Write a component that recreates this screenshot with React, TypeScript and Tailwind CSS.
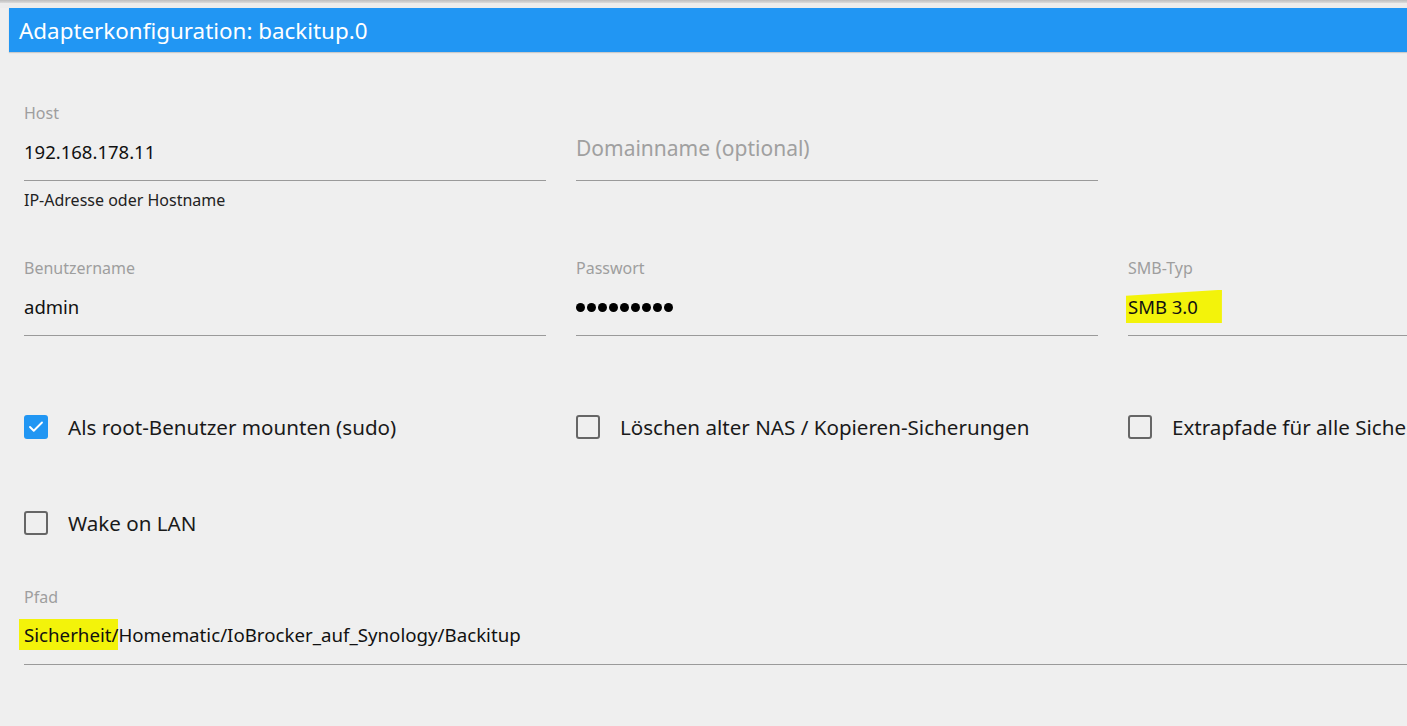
import { Check } from 'lucide-react';
import type { ReactNode } from 'react';

const font = { fontFamily: '"Noto Sans", "Open Sans", sans-serif' };

function Field({ label, children, helper, muted }: { label: string; children: ReactNode; helper?: string; muted?: boolean }) {
  return (
    <div className="flex flex-col">
      <div className="text-[16px] leading-[20px] h-[20px] text-[#9e9e9e]">{label}</div>
      <div className={`h-[58px] flex items-center border-b border-[#9a9a9a] ${muted ? 'pb-[6px]' : ''}`}>
        {children}
      </div>
      {helper && <div className="text-[16px] leading-[20px] text-[#222] mt-[9px]">{helper}</div>}
    </div>
  );
}

function CheckboxRow({ label, checked }: { label: string; checked?: boolean }) {
  return (
    <div className="h-[40px] flex items-center gap-[20px]">
      {checked ? (
        <span className="w-[24px] h-[24px] rounded-[3px] bg-[#2196f3] flex items-center justify-center">
          <Check size={18} strokeWidth={2.5} className="text-white" />
        </span>
      ) : (
        <span className="w-[24px] h-[24px] rounded-[3px] border-2 border-[#666]" />
      )}
      <span className="text-[20.6px] text-[#1a1a1a] whitespace-nowrap">{label}</span>
    </div>
  );
}

export default function App() {
  return (
    <div style={font} className="w-full h-[726px] bg-[#efefef] overflow-hidden">
      {/* top strip */}
      <div className="h-[3px] bg-gradient-to-b from-[#bdbdbd] to-[#dcdcdc]" />
      <div className="h-[5px] bg-[#ececec]" />

      {/* header */}
      <div className="ml-[9px] h-[44px] bg-[#2196f3] flex items-center pl-[10px] pt-[2px] shadow-[0_1px_1px_rgba(0,0,0,0.15)]">
        <span className="text-white text-[22.4px]">Adapterkonfiguration: backitup.0</span>
      </div>

      {/* form */}
      <div className="pl-[24px] pt-[51px] w-[1700px]">
        <div className="grid grid-cols-[522px_522px_522px] gap-x-[30px]">
          <Field label="Host" helper="IP-Adresse oder Hostname">
            <span className="text-[18.5px] text-[#111]">192.168.178.11</span>
          </Field>
          <Field label="" muted>
            <span className="text-[21px] text-[#a0a0a0]">Domainname (optional)</span>
          </Field>
          <div />

          <div className="mt-[48px]">
            <Field label="Benutzername">
              <span className="text-[18.5px] text-[#111]">admin</span>
            </Field>
          </div>
          <div className="mt-[48px]">
            <Field label="Passwort">
              <div className="flex gap-[2.5px] pt-[2px]">
                {Array.from({ length: 9 }).map((_, i) => (
                  <span key={i} className="w-[8.5px] h-[8.5px] rounded-full bg-black" />
                ))}
              </div>
            </Field>
          </div>
          <div className="mt-[48px]">
            <Field label="SMB-Typ">
              <span className="text-[18.5px] text-[#111] bg-[#f3f30a] -ml-[2px] pl-[2px] pr-[24px] py-[3px] [clip-path:polygon(0_18%,100%_0,100%_100%,0_100%)]">
                SMB 3.0
              </span>
            </Field>
          </div>

          <div className="mt-[71px]">
            <CheckboxRow label="Als root-Benutzer mounten (sudo)" checked />
          </div>
          <div className="mt-[71px]">
            <CheckboxRow label="Löschen alter NAS / Kopieren-Sicherungen" />
          </div>
          <div className="mt-[71px]">
            <CheckboxRow label="Extrapfade für alle Sicherungen" />
          </div>

          <div className="mt-[56px] col-span-3">
            <CheckboxRow label="Wake on LAN" />
          </div>

          <div className="mt-[44px] col-span-3">
            <Field label="Pfad">
              <span className="text-[18.7px] text-[#111] whitespace-nowrap">
                <span className="bg-[#f3f30a] -ml-[5px] pl-[5px] py-[3px]">Sicherheit/</span>
                Homematic/IoBrocker_auf_Synology/Backitup
              </span>
            </Field>
          </div>
        </div>
      </div>
    </div>
  );
}
